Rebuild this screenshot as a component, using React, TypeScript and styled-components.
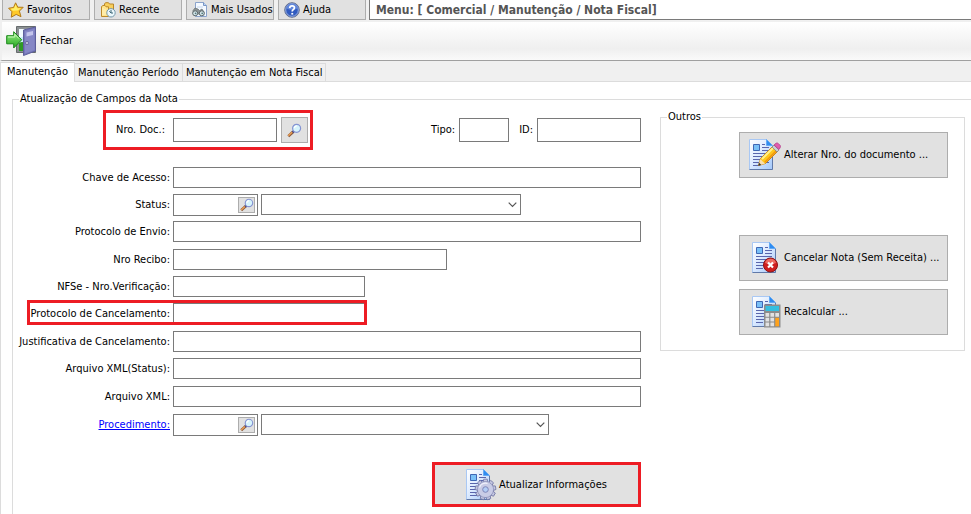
import React, { useId } from 'react';
import styled, { createGlobalStyle, css } from 'styled-components';

const red = '#ed1c24';
const line = '#dcdcdc';

const GlobalStyle = createGlobalStyle`
  *, *::before, *::after { box-sizing: border-box; }
  html, body { margin: 0; background: #fff; }
  body, button, input, select {
    font-family: Tahoma, "DejaVu Sans Condensed", "Noto Sans", sans-serif;
    font-size: 11px;
    line-height: 14px;
    color: #000;
  }
  svg { display: block; flex: none; }
`;

const Screen = styled.div`
  min-height: 100vh;
  display: flex;
  flex-direction: column;
`;

const TopBar = styled.nav`
  display: flex;
  gap: 4px;
  height: 22px;
  padding: 0 0 2px 2px;
  background: #f0f0f0;
`;

const QuickButton = styled.button`
  display: flex;
  align-items: center;
  gap: 3px;
  width: 88px;
  padding: 0 0 0 5px;
  border: 1px solid #adadad;
  border-top: 0;
  background: #e1e1e1;
  white-space: nowrap;
`;

const MenuPath = styled.div`
  flex: 1;
  min-width: 0;
  margin-left: -1px;
  padding: 2px 6px;
  border: solid #7a7a7a;
  border-width: 0 0 1px 1px;
  background: #fff;
  color: #555;
  font-size: 12px;
  font-weight: bold;
  line-height: 16px;
  white-space: nowrap;
`;

const ToolBar = styled.div`
  display: flex;
  height: 39px;
  padding-left: 4px;
  border-left: 2px solid #f0f0f0;
  border-bottom: 1px solid #a0a0a0;
  background: linear-gradient(#fff 0%, #f6f6f6 40%, #efefef 70%, #fafafa 100%);
`;

const CloseButton = styled.button`
  display: flex;
  align-items: center;
  gap: 3px;
  padding: 0;
  border: 0;
  background: none;
`;

const TabStrip = styled.div`
  display: flex;
  align-items: flex-end;
  height: 21px;
  background: #f0f0f0;
  border-bottom: 1px solid ${line};
`;

const Tab = styled.button<{ $active?: boolean }>`
  height: 18px;
  padding: 0 3px;
  border: 1px solid ${line};
  border-width: 1px 1px 0 0;
  background: #f0f0f0;
  white-space: nowrap;
  ${({ $active }) =>
    $active &&
    css`
      height: 20px;
      padding: 0 6px 2px;
      margin-bottom: -1px;
      border-left-width: 1px;
      background: #fff;
    `}
`;

const Panel = styled.main`
  flex: 1;
  display: flex;
  padding: 10px 0 0 11px;
  border-left: 1px solid ${line};
`;

const Group = styled.fieldset`
  min-width: 0;
  margin: 0;
  padding: 0;
  border: 1px solid ${line};
`;

const UpdateGroup = styled(Group)`
  flex: 1;
  border-width: 1px 0 0 1px;
`;

const Legend = styled.legend`
  margin-left: 6px;
  padding: 0 1px;
`;

const Columns = styled.div`
  display: flex;
  align-items: flex-start;
  gap: 19px;
  padding: 4px 6px 7px 0;
`;

const Form = styled.form`
  flex: 1;
  min-width: 0;
  display: flex;
  flex-direction: column;
`;

const KeyRow = styled.div`
  display: flex;
  align-items: center;
  margin: 0 0 17px 90px;
`;

const KeyBox = styled.div`
  display: flex;
  align-items: center;
  justify-content: flex-end;
  width: 210px;
  height: 40px;
  padding-right: 2px;
  border: 3px solid ${red};
`;

const KeyFields = styled.div`
  display: flex;
  align-items: center;
  gap: 4px;
  margin-left: auto;
`;

const TextBox = styled.input<{ $w?: number; $tall?: boolean }>`
  ${({ $w }) => ($w ? `width: ${$w}px;` : 'flex: 1; min-width: 0;')}
  height: ${({ $tall }) => ($tall ? 24 : 21)}px;
  margin: 0;
  padding: 0 3px;
  border: 1px solid #7a7a7a;
  border-radius: 0;
  background: #fff;
`;

const DocLabel = styled.label`
  margin-right: 8px;
`;

const IdLabel = styled.label`
  margin-left: 6px;
`;

const SearchButton = styled.button`
  display: grid;
  place-items: center;
  width: 27px;
  height: 26px;
  margin-left: 4px;
  padding: 0;
  border: 1px solid #adadad;
  background: #e1e1e1;
`;

const Rows = styled.div`
  display: flex;
  flex-direction: column;
  gap: 7px;
`;

const RowSet = styled.div`
  display: flex;
  flex-direction: column;
  gap: 6px;
`;

const Row = styled.div<{ $marked?: boolean }>`
  position: relative;
  display: flex;
  gap: 3px;
  height: 21px;
  ${({ $marked }) =>
    $marked &&
    css`
      width: 354px;
      &::after {
        content: '';
        position: absolute;
        inset: -3px 0 -1px 14px;
        border: 3px solid ${red};
        pointer-events: none;
      }
    `}
`;

const RowLabel = styled.label`
  width: 157px;
  padding-top: 4px;
  text-align: right;
  white-space: nowrap;
`;

const RowLink = styled.a`
  width: 157px;
  padding-top: 4px;
  text-align: right;
  color: #0000ff;
`;

const LookupFrame = styled.div`
  display: flex;
  align-items: center;
  width: 85px;
  height: 22px;
  padding-right: 2px;
  border: 1px solid #7a7a7a;
  background: #fff;
`;

const LookupInput = styled.input`
  flex: 1;
  min-width: 0;
  padding: 0 3px;
  border: 0;
  background: none;
`;

const LookupButton = styled.button`
  display: grid;
  place-items: center;
  width: 17px;
  height: 16px;
  padding: 0;
  border: 1px solid #adadad;
  background: #e1e1e1;
`;

const SelectFrame = styled.div<{ $w: number }>`
  position: relative;
  width: ${({ $w }) => $w}px;
  height: 21px;
  svg {
    position: absolute;
    right: 4px;
    top: 8px;
    pointer-events: none;
  }
`;

const Select = styled.select`
  appearance: none;
  width: 100%;
  height: 100%;
  padding: 0 18px 0 3px;
  border: 1px solid #7a7a7a;
  border-radius: 0;
  background: #fff;
`;

const UpdateButton = styled.button`
  display: flex;
  align-items: center;
  justify-content: center;
  gap: 1px;
  align-self: flex-end;
  width: 209px;
  height: 45px;
  margin-top: 27px;
  padding: 0;
  border: 3px solid ${red};
  background: #e1e1e1;
  white-space: nowrap;
`;

const OthersGroup = styled(Group)`
  flex: 0 1 305px;
`;

const OthersList = styled.div`
  display: flex;
  flex-direction: column;
  align-items: flex-end;
  gap: 8px;
  padding: 8px 16px 15px 0;
`;

const ActionButton = styled.button<{ $apart?: boolean }>`
  display: flex;
  align-items: center;
  gap: 3px;
  width: 209px;
  height: 46px;
  margin-bottom: ${({ $apart }) => ($apart ? 49 : 0)}px;
  padding: 0 0 0 9px;
  border: 1px solid #adadad;
  background: #e1e1e1;
  white-space: nowrap;
`;

function StarIcon() {
  return (
    <svg width="16" height="16" viewBox="0 0 16 16">
      <path d="M7.6.8 9.8 5.2l5.4.1-3.8 3.8 1.6 5.6-4.8-2.3-4.9 2.8.6-5.5L.6 6.2l4.9-.7z" fill="#ffc928" stroke="#b07a1c" strokeWidth="1" strokeLinejoin="round" />
      <path d="M7.6 2.6 9.1 6.2l3.9.1-3.3 2.2-4.9.3L2.6 6.8l3.5-.5z" fill="#fff06a" />
    </svg>
  );
}

function RecentIcon() {
  return (
    <svg width="16" height="16" viewBox="0 0 16 16">
      <path d="M4.5 3.5V2l1-1.3h3L9.500 2h4v10H4.500z" fill="#f8cf5c" stroke="#b8862b" />
      <path d="M1.500 14.500v-10L3 3.500h2l1 1.300h2.500v9.700z" fill="#ffe58d" stroke="#bd8a2a" />
      <path d="M3 6v7M5 7v6" stroke="#fff4c4" />
      <circle cx="11" cy="10.800" r="4.200" fill="#eaf7fb" stroke="#7397a9" />
      <path d="M11 8v3h2M9.300 9.300 11 11" fill="none" stroke="#3c6676" />
    </svg>
  );
}

function MostUsedIcon() {
  return (
    <svg width="16" height="16" viewBox="0 0 16 16">
      <path d="M3.500.5h8l3 3v11h-11z" fill="#f4f9ff" stroke="#8aa3cc" />
      <path d="M11.500.5v3h3" fill="#bed6f4" stroke="#7795c5" />
      <path d="M5 5h6M9 13h4" stroke="#c4d6ee" />
      <path d="M1 8.500 3 6l3 1 1.500 1.500L10 7l2 3v2H1z" fill="#8b9395" stroke="#5c6466" strokeWidth=".6" />
      <circle cx="3.200" cy="11.300" r="2.500" fill="#d7e8eb" stroke="#5b6769" />
      <circle cx="9.800" cy="11.300" r="2.500" fill="#d7e8eb" stroke="#5b6769" />
      <circle cx="3.600" cy="11.300" r=".9" fill="#54787e" />
      <circle cx="10.200" cy="11.300" r=".9" fill="#54787e" />
    </svg>
  );
}

function HelpIcon() {
  return (
    <svg width="16" height="16" viewBox="0 0 16 16">
      <circle cx="8" cy="8" r="7.300" fill="#315bbf" stroke="#6b7590" />
      <circle cx="8" cy="8" r="6.300" fill="none" stroke="#a9bee9" strokeWidth=".8" />
      <path d="M2.600 6.500a5.500 5.500 0 0 1 10.800 0Q8 9 2.600 6.500" fill="#6288dc" />
      <path d="M5.700 6.100Q5.800 3.900 8.100 3.900t2.300 1.900Q10.400 7 9.100 7.800 8.200 8.300 8.200 9.600" fill="none" stroke="#fff" strokeWidth="1.700" />
      <path d="M7.300 10.900h1.900v1.700H7.300z" fill="#fff" />
    </svg>
  );
}

function DoorIcon() {
  const id = useId();
  return (
    <svg width="31" height="32" viewBox="0 0 31 32">
      <defs>
        <linearGradient id={id} x1="0" y1="0" x2="0" y2="1">
          <stop offset="0" stopColor="#9cf08a" />
          <stop offset="1" stopColor="#22a51c" />
        </linearGradient>
      </defs>
      <path d="M10.500 1.500h19v26h-19z" fill="#8b9092" stroke="#666b6d" />
      <path d="M13 4h14v22H13z" fill="#c9eff9" />
      <path d="M13 18q3-2 6 0v8h-6z" fill="#2f9a25" />
      <path d="M13 4h6v6q-3 3-6 2z" fill="#f1fbff" />
      <path d="m17.500 5 12-3v24l-12 4.500z" fill="#7577b8" stroke="#5d5f9c" />
      <path d="m19 6.200 9.500-2.400v21.200L19 28.500z" fill="#8587c6" />
      <path d="m20.500 7.500 6.500-1.400v4l-6.500 1.400z" fill="#c4c5ec" />
      <path d="M20 16.500h2v3h-2z" fill="#e8e8ff" stroke="#45477b" strokeWidth=".6" />
      <path d="M.7 10.700h7v-4l8 8.100-8 8.200v-4.200h-7z" fill={`url(#${id})`} stroke="#198819" strokeLinejoin="round" />
      <path d="M2 12h6.800V9.300l4 4.200" fill="none" stroke="#c6f8b7" />
    </svg>
  );
}

function MagnifierIcon({ size = 15 }: { size?: number }) {
  return (
    <svg width={size} height={size} viewBox="0 0 15 15">
      <path d="m1.300 13.200 5-4.600" stroke="#8a5a3c" strokeWidth="2.800" />
      <path d="m1.300 12.800 4-3.700" stroke="#f0a152" strokeWidth="1.300" />
      <path d="m5.600 9.300 1.600-1.500" stroke="#4a4c8a" strokeWidth="2.400" />
      <circle cx="9.600" cy="5.300" r="4" fill="#d6f4fc" stroke="#8493d2" strokeWidth="1.200" />
      <path d="M7.300 5.200Q7.600 3.100 9.800 2.900" fill="none" stroke="#fff" strokeWidth="1.300" />
    </svg>
  );
}

function Chevron() {
  return (
    <svg width="9" height="6" viewBox="0 0 9 6">
      <path d="m.7.700 3.800 3.800L8.300.7" fill="none" stroke="#555" strokeWidth="1.200" />
    </svg>
  );
}

function Sheet({ x }: { x: number }) {
  const id = useId();
  return (
    <g transform={`translate(${x} 0)`}>
      <defs>
        <linearGradient id={id} x1="0" y1="0" x2="1" y2="1">
          <stop offset="0" stopColor="#fff" />
          <stop offset=".4" stopColor="#e2eeff" />
          <stop offset="1" stopColor="#a3c8fb" />
        </linearGradient>
      </defs>
      <path d="M.5.5h17l6 6v24H.5z" fill={`url(#${id})`} stroke="#a9c8f4" />
      <path d="M.5 30.500h23V7" fill="none" stroke="#6079a8" />
      <path d="M17.500.5v6h6z" fill="#2f8cf0" stroke="#5aa4f2" strokeWidth=".8" />
      <path d="M4.500 5.500h6v6h-6z" fill="#79c0f7" stroke="#3f67b4" />
      <path d="M13 5.500h3M13 8.500h7M13 11.500h7M4 14.500h16M4 17.500h16M4 20.500h16M4 23.500h16M4 26.500h7" stroke="#5a66ac" />
    </g>
  );
}

function EditDocIcon() {
  return (
    <svg width="32" height="32" viewBox="0 0 32 32">
      <Sheet x={0} />
      <path d="m9.500 26.500 2-7L24 7l5 5-12.500 12.500z" fill="#ffc61a" stroke="#c47d12" strokeWidth=".9" />
      <path d="m13 20 12-12" stroke="#fff08a" strokeWidth="2" />
      <path d="m15.800 23.300 12-12" stroke="#ef9410" strokeWidth="1.500" />
      <path d="m9.500 26.500 1.800-6.400 4.800 4.700z" fill="#f7deb1" />
      <path d="m9.300 26.700.8-3 2.200 2.200z" fill="#333" />
      <path d="m23 8 2-2 5 5-2 2z" fill="#c9cdd2" stroke="#777e86" strokeWidth=".7" />
      <path d="m25 6 2-1.800q1.200-.7 2.200.2l2 2q.8 1.200 0 2.200L30 10.500z" fill="#e05cae" stroke="#b03482" strokeWidth=".7" />
    </svg>
  );
}

function CancelDocIcon() {
  return (
    <svg width="32" height="32" viewBox="0 0 32 32">
      <Sheet x={3} />
      <circle cx="21.500" cy="23" r="7" fill="#cf1f1f" stroke="#8d1010" />
      <path d="M16 21a5.700 5.700 0 0 1 11 0q-5 2-11 0" fill="#ee6a60" />
      <path d="m19 20.500 5 5m0-5-5 5" stroke="#fff" strokeWidth="2.200" />
    </svg>
  );
}

function CalcDocIcon() {
  return (
    <svg width="32" height="32" viewBox="0 0 32 32">
      <Sheet x={3} />
      <path d="M15 8.500h16.500v23H15z" fill="#8c8c8c" />
      <path d="M16.500 10h13.500v5H16.500z" fill="#35bfe0" />
      <path d="M16.500 17h3.700v3.700h-3.700zM21.400 17h3.700v3.700h-3.700zM26.300 17H30v3.700h-3.700zM16.500 21.800h3.700v3.700h-3.700zM21.400 21.800h3.700v3.700h-3.700zM16.500 26.600h3.700v3.700h-3.700zM21.400 26.600h3.700v3.700h-3.700z" fill="#e2e2e2" />
      <path d="M26.300 21.800H30v8.500h-3.700z" fill="#ffa21c" />
    </svg>
  );
}

function GearDocIcon() {
  return (
    <svg width="32" height="32" viewBox="0 0 32 32">
      <Sheet x={0} />
      <g transform="translate(19.500 20.500)">
        {[0, 40, 80, 120, 160, 200, 240, 280, 320].map((angle) => (
          <path key={angle} d="M-2.400-7-1.800-10.300h3.600L2.400-7z" transform={`rotate(${angle})`} fill="#c3c6e0" stroke="#7377a5" strokeWidth=".8" />
        ))}
        <circle r="8" fill="#c6c9e4" stroke="#8084b0" strokeWidth=".7" />
        <circle r="7.300" fill="#c9cce6" />
        <path d="M-6-2a6.300 6.300 0 0 1 8-4" fill="none" stroke="#f0f1fb" strokeWidth="1.200" />
        <circle r="2.800" fill="#b3cdf5" stroke="#7f86b8" />
      </g>
    </svg>
  );
}

function TextRow({ id, label, width, marked }: { id: string; label: string; width?: number; marked?: boolean }) {
  return (
    <Row $marked={marked}>
      <RowLabel htmlFor={id}>{label}</RowLabel>
      <TextBox id={id} type="text" $w={width} />
    </Row>
  );
}

function LookupFields({ id, name, width }: { id: string; name: string; width: number }) {
  return (
    <>
      <LookupFrame>
        <LookupInput id={id} type="text" aria-label={`Código ${name}`} />
        <LookupButton type="button" aria-label={`Pesquisar ${name}`}>
          <MagnifierIcon size={14} />
        </LookupButton>
      </LookupFrame>
      <SelectFrame $w={width}>
        <Select aria-label={name} />
        <Chevron />
      </SelectFrame>
    </>
  );
}

export default function App() {
  return (
    <Screen>
      <GlobalStyle />
      <TopBar>
        <QuickButton type="button"><StarIcon />Favoritos</QuickButton>
        <QuickButton type="button"><RecentIcon />Recente</QuickButton>
        <QuickButton type="button"><MostUsedIcon />Mais Usados</QuickButton>
        <QuickButton type="button"><HelpIcon />Ajuda</QuickButton>
        <MenuPath>Menu: [ Comercial / Manutenção / Nota Fiscal]</MenuPath>
      </TopBar>
      <ToolBar>
        <CloseButton type="button"><DoorIcon />Fechar</CloseButton>
      </ToolBar>
      <TabStrip role="tablist">
        <Tab type="button" role="tab" aria-selected="true" $active>Manutenção</Tab>
        <Tab type="button" role="tab" aria-selected="false">Manutenção Período</Tab>
        <Tab type="button" role="tab" aria-selected="false">Manutenção em Nota Fiscal</Tab>
      </TabStrip>
      <Panel>
        <UpdateGroup>
          <Legend>Atualização de Campos da Nota</Legend>
          <Columns>
            <Form onSubmit={(event) => event.preventDefault()}>
              <KeyRow>
                <KeyBox>
                  <DocLabel htmlFor="doc">Nro. Doc.:</DocLabel>
                  <TextBox id="doc" type="text" $w={104} $tall />
                  <SearchButton type="button" aria-label="Pesquisar documento">
                    <MagnifierIcon />
                  </SearchButton>
                </KeyBox>
                <KeyFields>
                  <label htmlFor="tipo">Tipo:</label>
                  <TextBox id="tipo" type="text" $w={50} $tall />
                  <IdLabel htmlFor="docId">ID:</IdLabel>
                  <TextBox id="docId" type="text" $w={104} $tall />
                </KeyFields>
              </KeyRow>
              <Rows>
                <RowSet>
                  <TextRow id="chave" label="Chave de Acesso:" />
                  <Row>
                    <RowLabel htmlFor="status">Status:</RowLabel>
                    <LookupFields id="status" name="Status" width={260} />
                  </Row>
                  <TextRow id="envio" label="Protocolo de Envio:" />
                </RowSet>
                <RowSet>
                  <TextRow id="recibo" label="Nro Recibo:" width={274} />
                  <TextRow id="nfse" label="NFSe - Nro.Verificação:" width={192} />
                  <TextRow id="cancelamento" label="Protocolo de Cancelamento:" width={192} marked />
                </RowSet>
                <RowSet>
                  <TextRow id="justificativa" label="Justificativa de Cancelamento:" />
                  <TextRow id="xmlStatus" label="Arquivo XML(Status):" />
                </RowSet>
                <RowSet>
                  <TextRow id="xml" label="Arquivo XML:" />
                </RowSet>
                <Row>
                  <RowLink href="#procedimento">Procedimento:</RowLink>
                  <LookupFields id="procedimento" name="Procedimento" width={288} />
                </Row>
              </Rows>
              <UpdateButton type="submit"><GearDocIcon />Atualizar Informações</UpdateButton>
            </Form>
            <OthersGroup>
              <Legend>Outros</Legend>
              <OthersList>
                <ActionButton type="button" $apart><EditDocIcon />Alterar Nro. do documento ...</ActionButton>
                <ActionButton type="button"><CancelDocIcon />Cancelar Nota (Sem Receita) ...</ActionButton>
                <ActionButton type="button"><CalcDocIcon />Recalcular ...</ActionButton>
              </OthersList>
            </OthersGroup>
          </Columns>
        </UpdateGroup>
      </Panel>
    </Screen>
  );
}
